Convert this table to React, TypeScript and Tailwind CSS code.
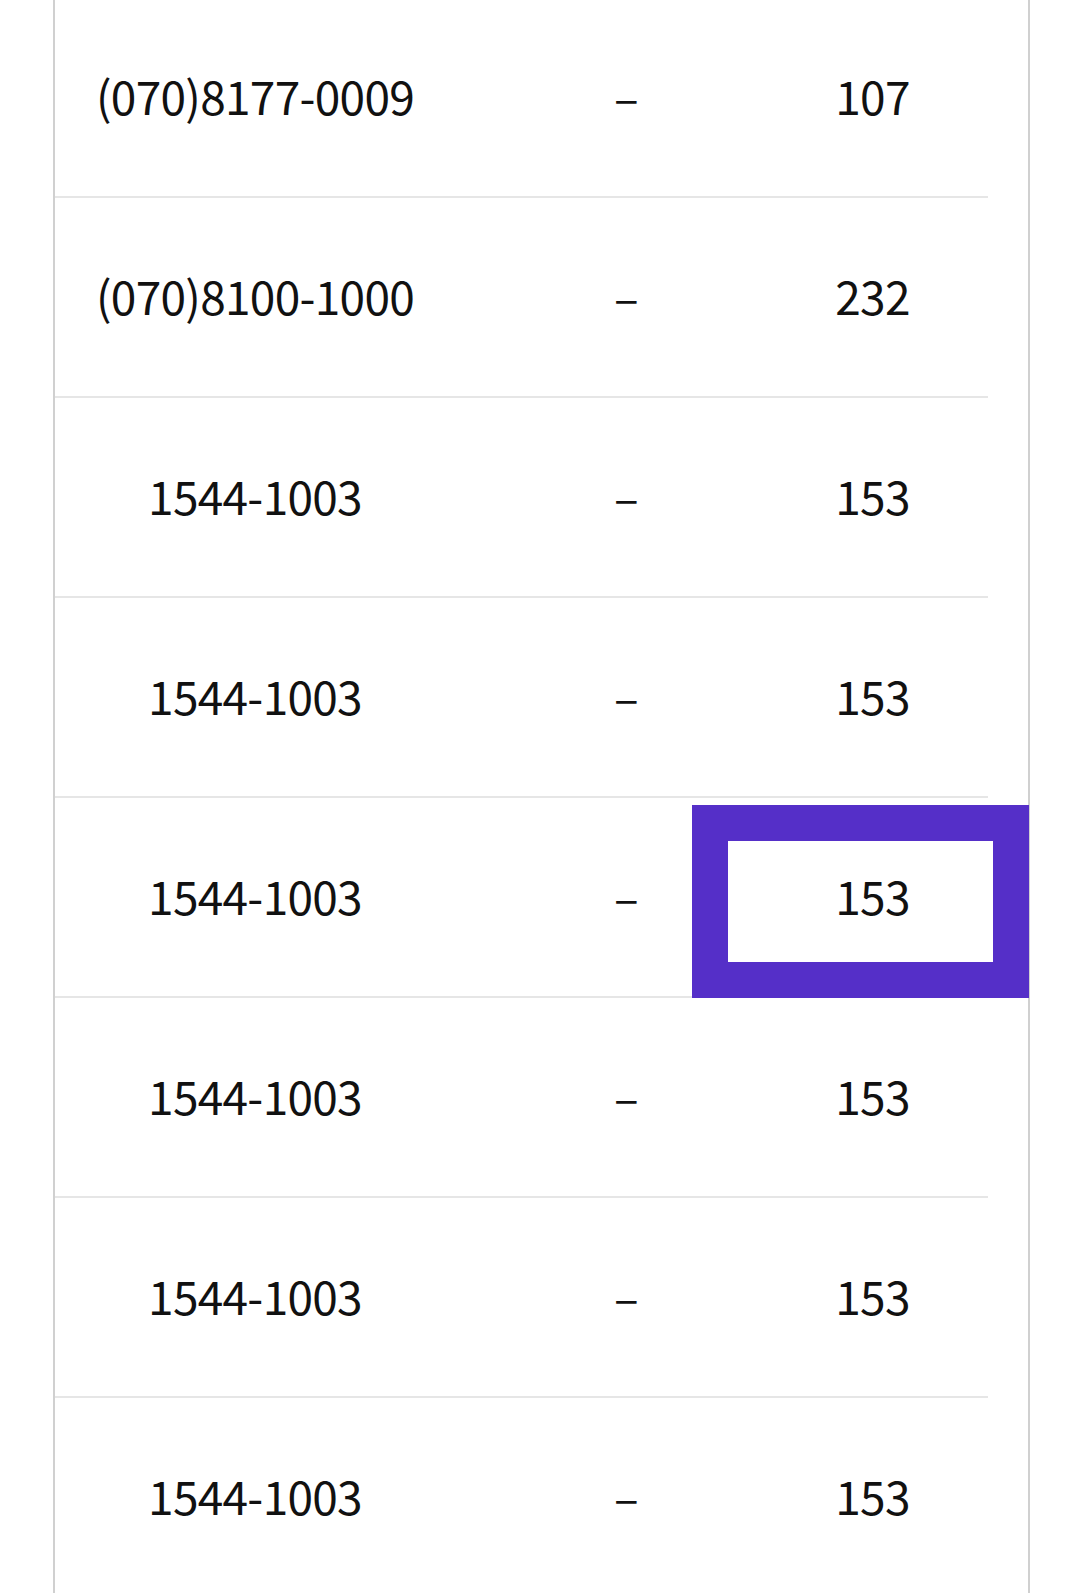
const rows = [
  { phone: '(070)8177-0009', ext: '–', code: '107' },
  { phone: '(070)8100-1000', ext: '–', code: '232' },
  { phone: '1544-1003', ext: '–', code: '153' },
  { phone: '1544-1003', ext: '–', code: '153' },
  { phone: '1544-1003', ext: '–', code: '153', marked: true },
  { phone: '1544-1003', ext: '–', code: '153' },
  { phone: '1544-1003', ext: '–', code: '153' },
  { phone: '1544-1003', ext: '–', code: '153' },
];

const App = () => {
  return (
    <div className="min-h-[1593px] w-[1080px] overflow-hidden bg-white font-['Noto_Sans_CJK_KR','Noto_Sans',sans-serif] text-[#111]">
      <div className="ml-[53px] -mt-[2px] min-h-[1600px] w-[977px] border-x-2 border-[#d0d0d0] pr-[40px]">
        {rows.map(({ phone, ext, code, marked }, i) => (
          <div
            key={i}
            className="relative flex h-[200px] items-center border-b-2 border-[#e6e6e6] pb-[4px] text-[46px] leading-none tracking-[-0.7px]"
          >
            <span className="w-[400px] text-center">{phone}</span>
            <span className="w-[342px] text-center">{ext}</span>
            <span className="flex-1 pr-[40px] text-center">{code}</span>
            {marked && (
              <div className="absolute left-[637px] top-[7px] h-[193px] w-[337px] border-[36px] border-[#552fc8]" />
            )}
          </div>
        ))}
      </div>
    </div>
  );
};

export default App;
